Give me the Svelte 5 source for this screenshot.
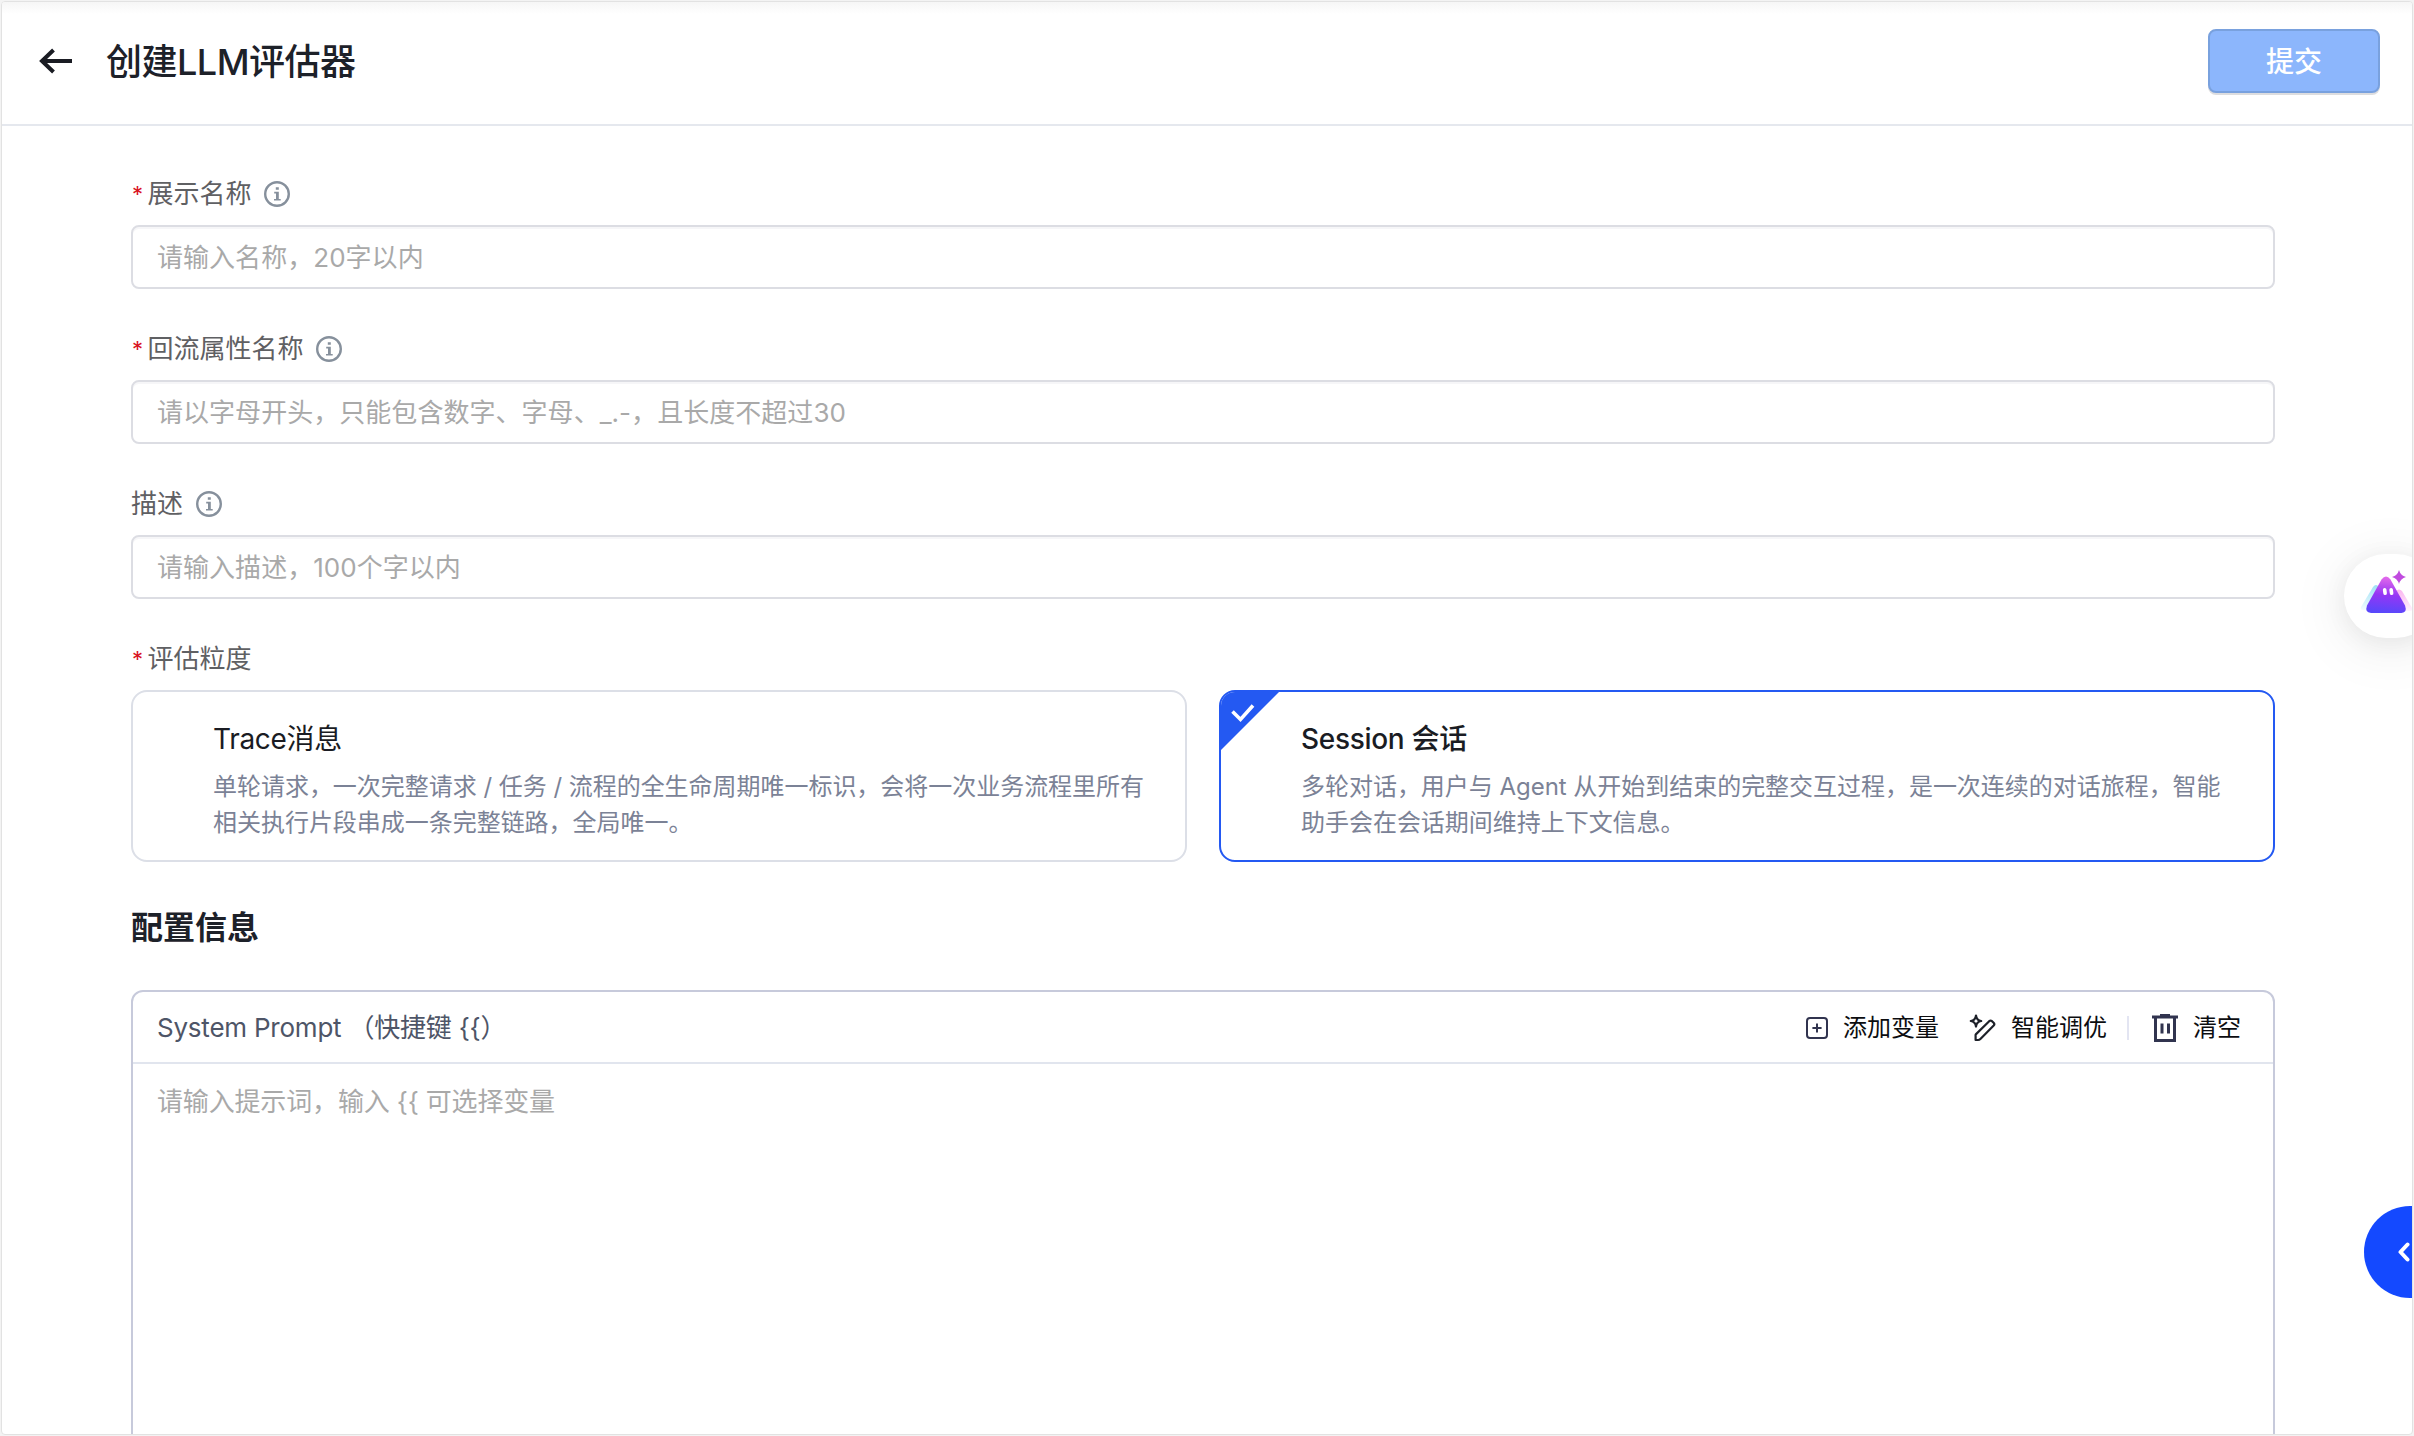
<script>
	const fields = [
		{ label: '展示名称', required: true, placeholder: '请输入名称，20字以内' },
		{ label: '回流属性名称', required: true, placeholder: '请以字母开头，只能包含数字、字母、_.-，且长度不超过30' },
		{ label: '描述', required: false, placeholder: '请输入描述，100个字以内' }
	];

	const levels = [
		{
			id: 'trace',
			title: 'Trace消息',
			desc: '单轮请求，一次完整请求 / 任务 / 流程的全生命周期唯一标识，会将一次业务流程里所有相关执行片段串成一条完整链路，全局唯一。'
		},
		{
			id: 'session',
			title: 'Session 会话',
			desc: '多轮对话，用户与 Agent 从开始到结束的完整交互过程，是一次连续的对话旅程，智能助手会在会话期间维持上下文信息。'
		}
	];

	const promptTitle = 'System Prompt （快捷键 {{）';
	const promptHint = '请输入提示词，输入 {{ 可选择变量';

	let selected = $state('session');
</script>

<div class="page">
	<header>
		<svg class="back" width="34" height="26" viewBox="0 0 34 26">
			<path d="M33 13H3M14.5 2L3 13L14.5 24" fill="none" stroke="#1a1c23" stroke-width="4" />
		</svg>
		<h1>创建LLM评估器</h1>
		<button class="submit">提交</button>
	</header>

	<main>
		{#each fields as field}
			<div class="field">
				<div class="label">
					{#if field.required}<span class="star">*</span>{/if}
					<span>{field.label}</span>
					<svg class="info" width="26" height="26" viewBox="0 0 26 26">
						<circle cx="13" cy="13" r="11.8" fill="none" stroke="#86909c" stroke-width="2.4" />
						<path d="M11.8 6.2h3v2.6h-3zM10.2 10.8h4.6v7.2h1.9v1.6h-6.7V18h2V12.4h-1.8z" fill="#86909c" />
					</svg>
				</div>
				<input type="text" placeholder={field.placeholder} />
			</div>
		{/each}

		<div class="label"><span class="star">*</span><span>评估粒度</span></div>
		<div class="levels">
			{#each levels as level}
				<button class="level" class:active={selected === level.id} onclick={() => (selected = level.id)}>
					{#if selected === level.id}
						<svg class="corner" width="60" height="60" viewBox="0 0 60 60">
							<path d="M0 0H60L0 60Z" fill="#2459f2" />
							<path d="M12.5 20.5L20.5 28.5L33 14.5" fill="none" stroke="#fff" stroke-width="3.6" />
						</svg>
					{/if}
					<strong>{level.title}</strong>
					<span class="desc">{level.desc}</span>
				</button>
			{/each}
		</div>

		<h2>配置信息</h2>

		<section class="editor">
			<div class="bar">
				<span class="prompt-title">{promptTitle}</span>
				<button class="tool">
					<svg width="22" height="22" viewBox="0 0 22 22" fill="none" stroke="#31344f" stroke-width="2">
						<rect x="1" y="1" width="20" height="20" rx="3" />
						<path d="M11 6.4V15.6M6.4 11H15.6" />
					</svg>
					添加变量
				</button>
				<button class="tool tune">
					<svg width="28" height="28" viewBox="0 0 28 28" fill="none" stroke="#1d2129" stroke-width="2.2" stroke-linejoin="round">
						<path d="M7 1.5C7.4 4.9 8.8 6.5 12.2 7C8.8 7.5 7.4 9.1 7 12.5C6.6 9.1 5.2 7.5 1.8 7C5.2 6.5 6.6 4.9 7 1.5Z" />
						<path d="M6.8 20.4L20.2 7.2Q21.6 6 23 7.2L24.6 8.8Q26 10.2 24.7 11.6L11.4 25Q10.4 26 9 26H6.6V22Q6.4 21 6.8 20.4Z" />
					</svg>
					智能调优
				</button>
				<i class="split"></i>
				<button class="tool">
					<svg width="26" height="30" viewBox="0 0 26 30" fill="none" stroke="#31344f" stroke-width="3">
						<path d="M0 4H26M3.5 4V27.5H22.5V4M10 10.5V20.5M16.5 10.5V20.5" />
						<path d="M8 2.2H18" stroke-width="2.4" />
					</svg>
					清空
				</button>
			</div>
			<textarea placeholder={promptHint}></textarea>
		</section>
	</main>

	<div class="assistant">
		<svg width="54" height="48" viewBox="0 0 54 48">
			<defs>
				<linearGradient id="peak" x1="0.5" y1="0" x2="0.4" y2="1">
					<stop offset="0" stop-color="#e56bea" />
					<stop offset="0.5" stop-color="#9436f5" />
					<stop offset="1" stop-color="#5748fb" />
				</linearGradient>
				<linearGradient id="ice" x1="0" y1="0" x2="0" y2="1">
					<stop offset="0" stop-color="#9fe2f5" />
					<stop offset="1" stop-color="#f2fbff" />
				</linearGradient>
				<linearGradient id="rose" x1="0" y1="0" x2="0" y2="1">
					<stop offset="0" stop-color="#fbb5f0" />
					<stop offset="1" stop-color="#fff3fd" />
				</linearGradient>
			</defs>
			<path d="M13 17Q16 13 19 17L29 36Q30 40 27 40H3Q0 40 1 37Z" fill="url(#ice)" />
			<path d="M36 21Q39 18 42 21L52 38Q53 41 50 41H30Z" fill="url(#rose)" />
			<path d="M21.5 9.5Q26 3.5 30.5 9.5L45 35.5Q47.5 42.5 41.5 43H11Q4.5 42.5 7 35.5Z" fill="url(#peak)" />
			<rect x="23" y="18" width="3.6" height="7" rx="1.8" fill="#fff" transform="rotate(-8 25 21)" />
			<rect x="29.5" y="18" width="3.6" height="7" rx="1.8" fill="#fff" transform="rotate(-8 31 21)" />
			<path d="M39 0Q40.5 5.5 46 7Q40.5 8.5 39 14Q37.5 8.5 32 7Q37.5 5.5 39 0Z" fill="#c04bdf" />
		</svg>
	</div>

	<div class="drawer">
		<svg width="14" height="20" viewBox="0 0 14 20">
			<path d="M10.5 2.5L3.5 10L10.5 17.5" fill="none" stroke="#fff" stroke-width="4" stroke-linecap="round" stroke-linejoin="round" />
		</svg>
	</div>
</div>

<style>
	:global(body) {
		background: #f3f3f3;
	}

	.page {
		position: relative;
		box-sizing: border-box;
		width: 2412px;
		height: 1434px;
		margin: 1px 0 0 1px;
		border: 1px solid #e2e2e2;
		border-radius: 4px;
		overflow: hidden;
		background: #fff;
		font-family: Inter, "Noto Sans CJK SC", sans-serif;
	}

	button, input, textarea {
		font-family: inherit;
	}

	header {
		display: flex;
		align-items: center;
		box-sizing: border-box;
		height: 124px;
		padding: 0 32px 4px 37px;
		border-bottom: 2px solid #e5e8ee;
		background: linear-gradient(#f6f6f6, #fff 12px);
	}

	h1 {
		flex: 1;
		margin: 1px 0 0 33px;
		font-size: 36px;
		line-height: 50px;
		font-weight: 500;
		letter-spacing: -0.5px;
		color: #1d2129;
	}

	.submit {
		box-sizing: border-box;
		width: 172px;
		height: 64px;
		padding: 0 0 2px;
		border: 2px solid #79a1de;
		border-radius: 8px;
		background: #8cb6fc;
		box-shadow: 0 2px 0 #dddddf;
		color: #fff;
		font-size: 28px;
		font-weight: 500;
	}

	main {
		padding: 48px 137px 0 129px;
	}

	.field {
		height: 155px;
	}

	.label {
		display: flex;
		align-items: center;
		height: 40px;
		margin-bottom: 11px;
		font-size: 26px;
		line-height: 40px;
		color: #5f6063;
	}

	.star {
		width: 16.5px;
		font-size: 22px;
		text-indent: 1px;
		color: #d9141e;
	}

	.info {
		margin-left: 12.5px;
	}

	input {
		display: block;
		box-sizing: border-box;
		width: 100%;
		height: 64px;
		padding: 1px 24px 0;
		border: 2px solid #dcdde3;
		border-radius: 8px;
		box-shadow: inset 0 2px 0 #f6f6f8;
		outline: none;
		font-size: 26px;
		letter-spacing: 0.04px;
	}

	input::placeholder,
	textarea::placeholder {
		color: #a9a9a9;
		opacity: 1;
	}

	.levels {
		display: grid;
		grid-template-columns: 1fr 1fr;
		gap: 32px;
	}

	.level {
		position: relative;
		box-sizing: border-box;
		height: 172px;
		padding: 8px 36px 0 80px;
		border: 2px solid #dcdfe7;
		border-radius: 16px;
		overflow: hidden;
		background: #fff;
		text-align: left;
	}

	.level.active {
		border-color: #2459f2;
	}

	.corner {
		position: absolute;
		top: -1px;
		left: -1px;
	}

	.level strong {
		display: block;
		margin-bottom: 10px;
		font-size: 28px;
		line-height: 40px;
		font-weight: 400;
		letter-spacing: -0.3px;
		color: #1a1c23;
	}

	.level.active strong {
		font-weight: 500;
	}

	.desc {
		display: block;
		font-size: 24px;
		line-height: 36px;
		letter-spacing: -0.03px;
		color: #7b8296;
	}

	h2 {
		margin: 42px 0 39px;
		font-size: 32px;
		line-height: 47px;
		font-weight: 600;
		color: #1d2129;
	}

	.editor {
		box-sizing: border-box;
		height: 500px;
		border: 2px solid #c7cadb;
		border-radius: 12px;
	}

	.bar {
		display: flex;
		align-items: center;
		height: 69px;
		padding: 1px 32px 0 24px;
		border-bottom: 2px solid #e1e5ee;
	}

	.prompt-title {
		flex: 1;
		font-size: 26px;
		line-height: 40px;
		letter-spacing: -0.22px;
		color: #4e5567;
	}

	.tool {
		display: flex;
		align-items: center;
		gap: 15px;
		padding: 0;
		border: 0;
		background: none;
		font-size: 24px;
		line-height: 36px;
		color: #0c0d10;
	}

	.tune {
		gap: 14px;
		margin-left: 30px;
	}

	.split {
		width: 2px;
		height: 24px;
		margin: 0 23px 0 20px;
		background: #e3e5f2;
	}

	textarea {
		display: block;
		box-sizing: border-box;
		width: 100%;
		height: 380px;
		padding: 18px 24px;
		border: 0;
		outline: none;
		resize: none;
		background: none;
		font-size: 26px;
		line-height: 40px;
		letter-spacing: -0.16px;
	}

	.assistant {
		position: absolute;
		top: 552px;
		right: -26px;
		box-sizing: border-box;
		width: 94px;
		height: 84px;
		padding: 16px 0 0 16px;
		border-radius: 42px;
		background: #fff;
		box-shadow: 0 8px 60px rgba(0, 0, 0, .09), 0 4px 24px rgba(0, 0, 0, .06);
	}

	.drawer {
		position: absolute;
		top: 1204px;
		right: -44px;
		display: flex;
		align-items: center;
		box-sizing: border-box;
		width: 92px;
		height: 92px;
		padding-left: 33px;
		border-radius: 50%;
		background: #1449ff;
	}
</style>
